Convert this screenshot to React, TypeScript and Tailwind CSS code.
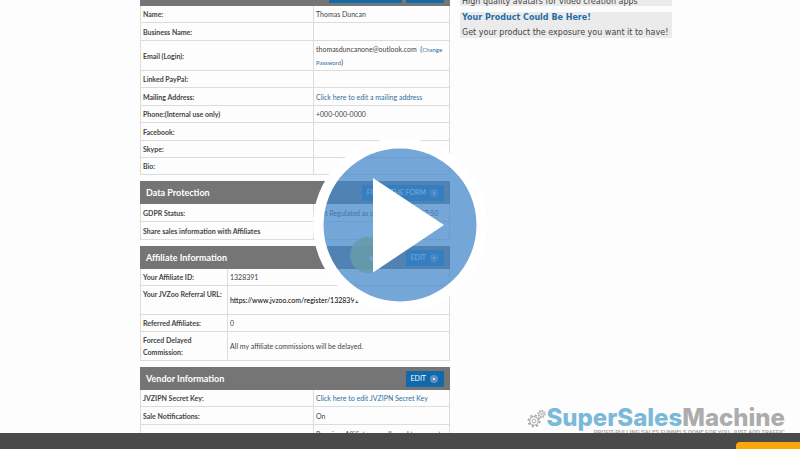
import type { ReactNode } from "react"

type Row = {
  label: string
  value?: ReactNode
  height: string
}

const Link = ({ children }: { children: ReactNode }) => (
  <a href="#" className="text-[#2f6f9f]">
    {children}
  </a>
)

const accountRows: Row[] = [
  { label: "Name:", value: "Thomas Duncan", height: "h-[17px]" },
  { label: "Business Name:", height: "h-[18px]" },
  {
    label: "Email (Login):",
    value: (
      <>
        thomasduncanone@outlook.com &nbsp;(
        <a href="#" className="text-[6px] text-[#2f6f9f]">
          Change Password
        </a>
        )
      </>
    ),
    height: "h-[30px]",
  },
  { label: "Linked PayPal:", height: "h-[17px]" },
  { label: "Mailing Address:", value: <Link>Click here to edit a mailing address</Link>, height: "h-[18px]" },
  { label: "Phone:(Internal use only)", value: "+000-000-0000", height: "h-[17px]" },
  { label: "Facebook:", height: "h-[18px]" },
  { label: "Skype:", height: "h-[17px]" },
  { label: "Bio:", height: "h-[17px]" },
]

const protectionRows: Row[] = [
  {
    label: "GDPR Status:",
    value: <span className="whitespace-nowrap">Not Regulated as of 05/24/18 07:07:50</span>,
    height: "h-[18px]",
  },
  { label: "Share sales information with Affiliates", height: "h-[18px]" },
]

const affiliateRows: Row[] = [
  { label: "Your Affiliate ID:", value: "1328391", height: "h-[17px]" },
  {
    label: "Your JVZoo Referral URL:",
    value: <span className="text-black">https://www.jvzoo.com/register/1328391</span>,
    height: "h-[29px]",
  },
  { label: "Referred Affiliates:", value: "0", height: "h-[17px]" },
  { label: "Forced Delayed Commission:", value: "All my affiliate commissions will be delayed.", height: "h-[29px]" },
]

const vendorRows: Row[] = [
  { label: "JVZIPN Secret Key:", value: <Link>Click here to edit JVZIPN Secret Key</Link>, height: "h-[17px]" },
  { label: "Sale Notifications:", value: "On", height: "h-[18px]" },
  { label: "", value: "Premium Affiliates are allowed to promote", height: "h-[18px]" },
]

function HeaderButton({ children }: { children: ReactNode }) {
  return (
    <button className="flex h-4 items-center gap-1 rounded-[1px] bg-[#0f69ab] pl-[5px] pr-1.5 text-[7px] text-white">
      {children}
      <span className="flex size-2 items-center justify-center rounded-full bg-[#5f8fc4]">
        <span className="size-0.5 rounded-full bg-white" />
      </span>
    </button>
  )
}

function RowTable({ rows, labelWidth = "w-[173px]" }: { rows: Row[]; labelWidth?: string }) {
  return (
    <table className="w-full table-fixed border-separate border-spacing-0 border-r border-[#dcdcdc] text-[7px] leading-3">
      <tbody>
        {rows.map((row) => (
          <tr key={row.label} className={row.height}>
            <th
              scope="row"
              className={`${labelWidth} border-b border-l border-[#dcdcdc] px-0.5 text-left font-bold text-[#444] ${
                row.label.includes("URL") ? "pt-0.5 align-top" : "py-0 align-middle"
              }`}
            >
              {row.label}
            </th>
            <td className="border-b border-l border-[#dcdcdc] px-0.5 py-0 align-middle text-[#444]">{row.value}</td>
          </tr>
        ))}
      </tbody>
    </table>
  )
}

function Section({
  title,
  button,
  rows,
  labelWidth,
}: {
  title: string
  button: string
  rows: Row[]
  labelWidth?: string
}) {
  return (
    <section>
      <div className="flex h-[23px] items-center justify-between bg-[#757575] px-1.5">
        <h2 className="text-[9px] font-bold text-white">{title}</h2>
        <HeaderButton>{button}</HeaderButton>
      </div>
      <RowTable rows={rows} labelWidth={labelWidth} />
    </section>
  )
}

function PlayButton() {
  return (
    <button aria-label="Play video" className="size-[174px]">
      <svg viewBox="0 0 174 174" className="size-full">
        <circle cx="87" cy="87" r="81.5" fill="none" stroke="#fff" strokeWidth="11" />
        <circle cx="87" cy="87" r="76.5" fill="#4387c9" fillOpacity="0.74" />
        <path d="M60 40v94.500l71-47.500z" fill="#fff" />
      </svg>
    </button>
  )
}

function Gears() {
  return (
    <svg viewBox="0 0 19 19" className="size-[19px]" fill="none" stroke="#a6a6a6">
      <circle cx="7" cy="12" r="4.3" strokeWidth="1.1" />
      <circle cx="7" cy="12" r="5.6" strokeWidth="1.8" strokeDasharray="2 2.4" />
      <circle cx="7" cy="12" r="1.9" strokeWidth="0.9" />
      <circle cx="14.500" cy="5" r="2.700" strokeWidth="0.9" />
      <circle cx="14.500" cy="5" r="3.600" strokeWidth="1.2" strokeDasharray="1.3 1.527" />
      <circle cx="14.500" cy="5" r="1" strokeWidth="0.8" />
    </svg>
  )
}

function Logo() {
  return (
    <div className="flex flex-col items-end">
      <div className="flex items-center">
        <Gears />
        <span className="font-['Inter',sans-serif] text-[24px] font-extrabold leading-5 text-[#7ab9d9]">
          SuperSales<span className="text-[#acacac]">Machine</span>
        </span>
      </div>
      <p className="font-['Roboto',sans-serif] text-[6px] font-medium leading-[7px] text-[#a0a0a0]">
        PROFIT-PULLING SALES FUNNELS DONE FOR YOU, JUST ADD TRAFFIC
      </p>
    </div>
  )
}

export default function App() {
  return (
    <div className="relative flex h-screen flex-col overflow-hidden bg-[#fdfdfd] font-[Lato,sans-serif]">
      <main className="relative flex-1 overflow-hidden">
        <div className="ml-[17.5%] flex items-start gap-[10px]">
          <div className="relative flex w-[310px] shrink-0 flex-col gap-1.5">
            <section>
              <div className="flex h-1.5 justify-end gap-1 bg-[#757575] px-1.5">
                <button aria-label="View profile" className="h-[3px] w-[73px] rounded-b-[1px] bg-[#0f69ab]" />
                <button aria-label="Edit" className="h-[3px] w-[38px] rounded-b-[1px] bg-[#0f69ab]" />
              </div>
              <RowTable rows={accountRows} />
            </section>
            <Section title="Data Protection" button="FILL IN THE FORM" rows={protectionRows} />
            <Section title="Affiliate Information" button="EDIT" rows={affiliateRows} labelWidth="w-[87px]" />
            <Section title="Vendor Information" button="EDIT" rows={vendorRows} />

            {/* Mouse highlight */}
            <div className="absolute left-[210px] top-[237px] flex size-9 items-center justify-center rounded-full bg-[#c4d84a]/85">
              <svg viewBox="0 0 8 10" className="ml-2 mt-2 h-2 w-1.5">
                <path d="M1 0v8l2-2 1.500 3 1.200-.6L4.500 5.500H7z" fill="#fff" />
              </svg>
            </div>
          </div>

          <aside className="flex w-[212px] flex-col gap-1.5 whitespace-nowrap font-['DejaVu_Sans',sans-serif] text-[8px] leading-[10px] text-[#444]">
            <div className="flex h-1.5 items-end bg-[#ebebeb] px-0.5">
              <p className="leading-2">High quality avatars for video creation apps</p>
            </div>
            <div className="flex flex-col gap-[5px] bg-[#ebebeb] px-0.5 pt-px">
              <a href="#" className="font-bold text-[#1f6fa8]">
                Your Product Could Be Here!
              </a>
              <p>Get your product the exposure you want it to have!</p>
            </div>
          </aside>
        </div>

        <div className="absolute -bottom-0.5 right-[15px]">
          <Logo />
        </div>
      </main>

      <footer className="flex h-4 items-end justify-end bg-[#4a4a4a]">
        <div className="h-[7px] w-16 rounded-tl-sm bg-[#f9a70b]" />
      </footer>

      <div className="pointer-events-none absolute inset-0 flex items-center justify-center">
        <PlayButton />
      </div>
    </div>
  )
}
